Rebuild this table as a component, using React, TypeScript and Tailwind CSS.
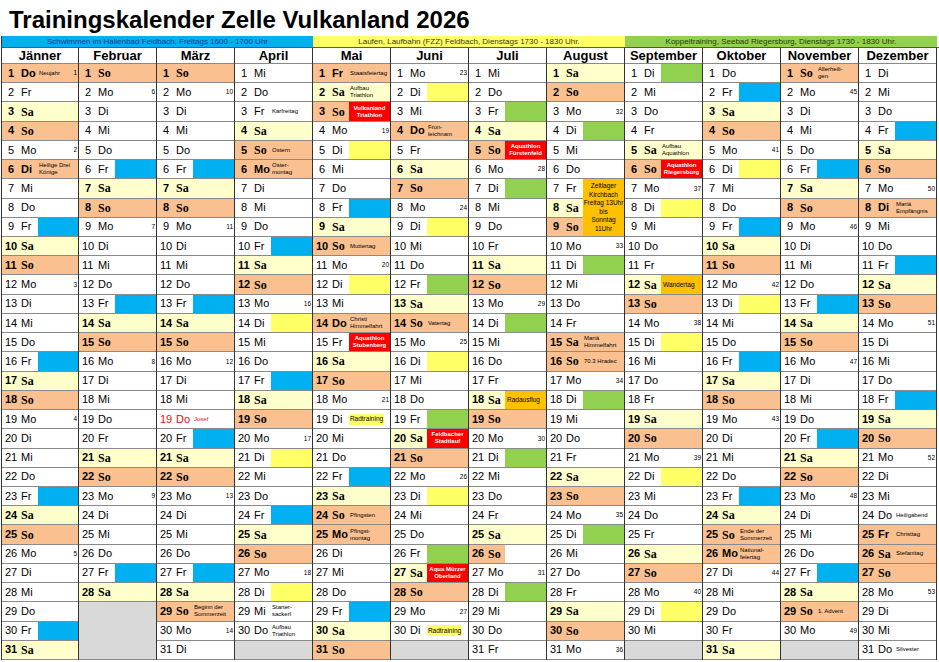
import React from "react"

const MONTHS = ["Jänner", "Februar", "März", "April", "Mai", "Juni", "Juli", "August", "September", "Oktober", "November", "Dezember"]
const WD = ["So", "Mo", "Di", "Mi", "Do", "Fr", "Sa"]
const DIM = [31, 28, 31, 30, 31, 30, 31, 31, 30, 31, 30, 31]

// Feiertage: fett, orange hinterlegt
const holidays = new Set(["1-1", "1-6", "4-6", "5-1", "5-14", "5-25", "6-4", "8-15", "10-26", "11-1", "12-8", "12-25", "12-26"])

type Kind = "note" | "red" | "orange" | "tag" | "camp"
const events: Record<string, { kind: Kind; lines: string[] }> = {
  "1-1": { kind: "note", lines: ["Neujahr"] },
  "1-6": { kind: "note", lines: ["Heilige Drei", "Könige"] },
  "3-19": { kind: "note", lines: ["Josef"] },
  "3-29": { kind: "note", lines: ["Beginn der", "Sommerzeit"] },
  "4-3": { kind: "note", lines: ["Karfreitag"] },
  "4-5": { kind: "note", lines: ["Ostern"] },
  "4-6": { kind: "note", lines: ["Oster-", "montag"] },
  "4-29": { kind: "note", lines: ["Starter-", "sackerl"] },
  "4-30": { kind: "note", lines: ["Aufbau", "Triathlon"] },
  "5-1": { kind: "note", lines: ["Staatsfeiertag"] },
  "5-2": { kind: "note", lines: ["Aufbau", "Triathlon"] },
  "5-3": { kind: "red", lines: ["Vulkanland", "Triathlon"] },
  "5-10": { kind: "note", lines: ["Muttertag"] },
  "5-14": { kind: "note", lines: ["Christi", "Himmelfahrt"] },
  "5-15": { kind: "red", lines: ["Aquathlon", "Stubenberg"] },
  "5-19": { kind: "tag", lines: ["Radtraining"] },
  "5-24": { kind: "note", lines: ["Pfingsten"] },
  "5-25": { kind: "note", lines: ["Pfingst-", "montag"] },
  "6-4": { kind: "note", lines: ["Fron-", "leichnam"] },
  "6-14": { kind: "note", lines: ["Vatertag"] },
  "6-20": { kind: "red", lines: ["Feldbacher", "Stadtlauf"] },
  "6-27": { kind: "red", lines: ["Aqua Mürzer", "Oberland"] },
  "6-30": { kind: "tag", lines: ["Radtraining"] },
  "7-5": { kind: "red", lines: ["Aquathlon", "Fürstenfeld"] },
  "7-18": { kind: "orange", lines: ["Radausflug"] },
  "8-7": { kind: "camp", lines: ["Zeltlager", "Kirchbach", "Freitag 13Uhr", "bis", "Sonntag", "11Uhr"] },
  "8-15": { kind: "note", lines: ["Mariä", "Himmelfahrt"] },
  "8-16": { kind: "note", lines: ["70.3 Hradec"] },
  "9-5": { kind: "note", lines: ["Aufbau", "Aquathlon"] },
  "9-6": { kind: "red", lines: ["Aquathlon", "Riegersburg"] },
  "9-12": { kind: "orange", lines: ["Wandertag"] },
  "10-25": { kind: "note", lines: ["Ende der", "Sommerzeit"] },
  "10-26": { kind: "note", lines: ["National-", "feiertag"] },
  "11-1": { kind: "note", lines: ["Allerheili-", "gen"] },
  "11-29": { kind: "note", lines: ["1. Advent"] },
  "12-8": { kind: "note", lines: ["Mariä", "Empfängnis"] },
  "12-24": { kind: "note", lines: ["Heiligabend"] },
  "12-25": { kind: "note", lines: ["Christtag"] },
  "12-26": { kind: "note", lines: ["Stefanitag"] },
  "12-31": { kind: "note", lines: ["Silvester"] },
}

const blocks: Record<string, string> = {}
const mark = (cls: string, keys: string) => keys.split(" ").forEach((k) => (blocks[k] = cls))
mark("bg-[#00b0f0]", "1-9 1-16 1-23 1-30 2-6 2-13 2-27 3-6 3-13 3-20 3-27 4-10 4-17 4-24 5-8 5-22 5-29 10-2 10-9 10-16 10-23 11-6 11-13 11-20 11-27 12-4 12-11 12-18")
mark("bg-[#ffff66]", "4-14 4-21 4-28 5-5 5-12 6-2 6-9 6-16 6-23 9-8 9-15 9-22 9-29 10-6 10-13")
mark("bg-[#92d050]", "6-12 6-19 6-26 7-3 7-7 7-14 7-21 7-28 8-4 8-11 8-18 8-25 9-1")
mark("bg-white", "7-26")

const spanCls: Record<number, string> = { 1: "row-span-1", 2: "row-span-2", 3: "row-span-3" }

function weekNo(m: number, d: number, wd: number, key: string) {
  if (key === "1-1") return 1
  if (key === "10-27") return 44
  if (wd !== 1 || holidays.has(key)) return null
  const doy = Math.round((Date.UTC(2026, m, d) - Date.UTC(2026, 0, 1)) / 86400000) + 1
  return Math.floor((doy - 5) / 7) + 2
}

const line = "border-b border-[#8a8a8a]"

function Day({ m, d }: { m: number; d: number }) {
  const key = `${m + 1}-${d}`
  const wd = new Date(2026, m, d).getDay()
  const hol = holidays.has(key)
  const bg = hol || wd === 0 ? "bg-[#fac090]" : wd === 6 ? "bg-[#ffffcc]" : "bg-white"
  const bold = hol || wd === 0 || wd === 6
  const josef = key === "3-19"
  const ev = events[key]
  const wk = weekNo(m, d, wd, key)
  const skipRight = m === 7 && (d === 8 || d === 9)

  let rightBg = blocks[key] ?? bg
  if (ev?.kind === "red") rightBg = "bg-[#ff0000]"
  if (ev?.kind === "orange" || ev?.kind === "camp") rightBg = "bg-[#ffc000]"

  return (
    <>
      <div className={`${bg} ${line} flex items-center text-[11px] leading-none ${josef ? "text-[#e01010]" : "text-black"}`}>
        <span className={`w-[16px] ${d < 10 ? "pl-[6px]" : "pl-[3px]"} ${bold ? "font-bold" : ""}`}>{d}</span>
        <span
          className={`ml-[3px] ${
            wd === 0 || wd === 6 ? "font-['Liberation_Serif',serif] font-bold text-[12px]" : bold ? "font-bold" : ""
          }`}
        >
          {WD[wd]}
        </span>
      </div>
      {!skipRight && (
        <div
          className={`${rightBg} ${line} min-w-0 overflow-hidden flex items-center ${
            ev?.kind === "camp" ? "row-span-3 justify-center" : ""
          }`}
        >
          {ev?.kind === "note" && (
            <div className={`text-[6px] leading-[7px] pl-[1px] whitespace-nowrap ${josef ? "text-[#e01010]" : "text-black"}`}>
              {ev.lines.map((l) => (
                <div key={l}>{l}</div>
              ))}
            </div>
          )}
          {(ev?.kind === "red" || ev?.kind === "camp") && (
            <div
              className={`w-full text-center whitespace-nowrap ${
                ev.kind === "red" ? "text-white font-bold text-[6px] leading-[7px]" : "text-black text-[6.5px] leading-[8.4px]"
              }`}
            >
              {ev.lines.map((l) => (
                <div key={l}>{l}</div>
              ))}
            </div>
          )}
          {ev?.kind === "orange" && <div className="pl-[2px] text-[6.5px] whitespace-nowrap">{ev.lines[0]}</div>}
          {ev?.kind === "tag" && (
            <div className="w-[35px] h-[11px] bg-[#ffff66] text-[6.5px] flex items-center justify-center whitespace-nowrap">
              {ev.lines[0]}
            </div>
          )}
          {wk !== null && <span className="ml-auto pr-[1px] text-[6.5px] text-black">{wk}</span>}
        </div>
      )}
    </>
  )
}

function Month({ m }: { m: number }) {
  const days = Array.from({ length: DIM[m] }, (_, i) => i + 1)
  const empty = 31 - DIM[m]
  return (
    <div className={`w-[78px] border-r border-[#333] ${m === 0 ? "border-l" : ""}`}>
      <div className={`h-[16px] ${line} text-center font-bold text-[13px] leading-[16px]`}>{MONTHS[m]}</div>
      <div className="h-[596px] grid grid-cols-[36px_1fr] grid-rows-[repeat(31,minmax(0,1fr))]">
        {days.map((d) => (
          <Day key={d} m={m} d={d} />
        ))}
        {empty > 0 && <div className={`col-span-2 ${spanCls[empty]} bg-[#d9d9d9] ${line}`} />}
      </div>
    </div>
  )
}

export default function App() {
  return (
    <div className="w-[939px] h-[662px] bg-white overflow-hidden text-black font-['Liberation_Sans',Arial,sans-serif]">
      <div className="h-[36px] pl-[9px] pt-[6px] text-[24px] leading-[28px] font-bold">
        Trainingskalender Zelle Vulkanland 2026
      </div>
      <div className="pl-[1px]">
        <div className="flex h-[12px] border-b border-[#555] text-[8px] leading-[12px]">
          <div className="w-[312px] bg-[#00b0f0] text-[#1b3a8a] text-center whitespace-nowrap border-l border-[#333]">
            Schwimmen im Hallenbad Feldbach, Freitags 1600 - 1700 Uhr
          </div>
          <div className="w-[312px] bg-[#ffff66] text-[#3a3a20] text-center whitespace-nowrap">
            Laufen, Laufbahn (FZZ) Feldbach, Dienstags 1730 - 1830 Uhr.
          </div>
          <div className="w-[312px] bg-[#92d050] text-[#24400f] text-center whitespace-nowrap">
            Koppeltraining, Seebad Riegersburg, Dienstags 1730 - 1830 Uhr.
          </div>
        </div>
        <div className="flex">
          {MONTHS.map((_, m) => (
            <Month key={m} m={m} />
          ))}
        </div>
      </div>
    </div>
  )
}
